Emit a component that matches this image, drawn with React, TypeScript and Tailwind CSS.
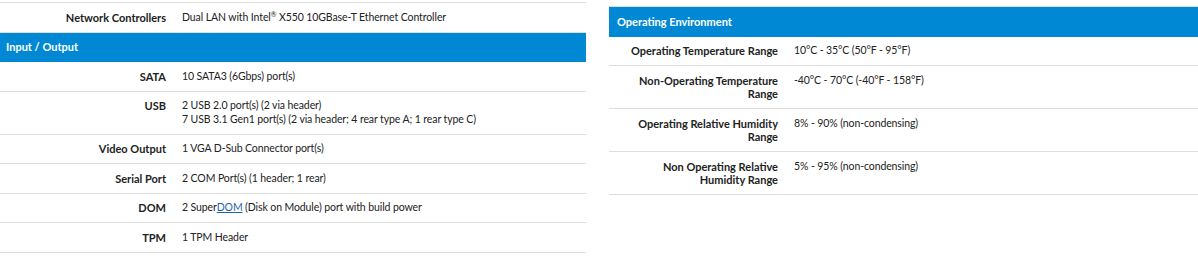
type Row = { label: React.ReactNode; value: React.ReactNode };

const FONT = "font-['Lato','Open_Sans',sans-serif]";

const ioRows: Row[] = [
  { label: "SATA", value: "10 SATA3 (6Gbps) port(s)" },
  {
    label: "USB",
    value: (
      <>
        2 USB 2.0 port(s) (2 via header)
        <br />7 USB 3.1 Gen1 port(s) (2 via header; 4 rear type A; 1 rear type C)
      </>
    ),
  },
  { label: "Video Output", value: "1 VGA D-Sub Connector port(s)" },
  { label: "Serial Port", value: "2 COM Port(s) (1 header; 1 rear)" },
  {
    label: "DOM",
    value: (
      <>
        2 Super
        <span className="text-[#1f64ad] underline">DOM</span> (Disk on Module)
        port with build power
      </>
    ),
  },
  { label: "TPM", value: "1 TPM Header" },
];

const envRows: Row[] = [
  {
    label: "Operating Temperature Range",
    value: "10°C - 35°C (50°F - 95°F)",
  },
  {
    label: (
      <>
        Non-Operating Temperature
        <br />
        Range
      </>
    ),
    value: "-40°C - 70°C (-40°F - 158°F)",
  },
  {
    label: (
      <>
        Operating Relative Humidity
        <br />
        Range
      </>
    ),
    value: "8% - 90% (non-condensing)",
  },
  {
    label: (
      <>
        Non Operating Relative
        <br />
        Humidity Range
      </>
    ),
    value: "5% - 95% (non-condensing)",
  },
];

function SpecRow({ row, labelW }: { row: Row; labelW: string }) {
  return (
    <div className="flex border-b border-[#dedede] leading-[13.5px]">
      <div
        className={`${labelW} shrink-0 py-[7.5px] pr-2 text-right text-[11px] font-bold text-[#222]`}
      >
        {row.label}
      </div>
      <div className="py-[7.5px] pl-2 text-[10.5px] tracking-[-0.1px] text-[#222]">
        {row.value}
      </div>
    </div>
  );
}

function Header({ title, pad }: { title: string; pad: string }) {
  return (
    <div
      className={`border-b border-[#0088d4] bg-[#0088d4] py-[7.5px] ${pad} text-[11px] font-bold leading-[13.5px] text-white`}
    >
      {title}
    </div>
  );
}

export default function App() {
  return (
    <div className={`flex h-[258px] w-[1198px] gap-[23px] bg-white ${FONT}`}>
      <div className="w-[586px] shrink-0 pt-[2px]">
        <div className="border-t border-[#dedede]" />
        <SpecRow
          labelW="w-[174px]"
          row={{
            label: "Network Controllers",
            value: (
              <>
                Dual LAN with Intel<sup className="text-[7px]">®</sup> X550
                10GBase-T Ethernet Controller
              </>
            ),
          }}
        />
        <Header title="Input / Output" pad="pl-[6px]" />
        {ioRows.map((r, i) => (
          <SpecRow key={i} row={r} labelW="w-[174px]" />
        ))}
      </div>

      <div className="flex-1 pt-[6px]">
        <div className="border-t border-[#dedede]" />
        <Header title="Operating Environment" pad="pl-2" />
        {envRows.map((r, i) => (
          <SpecRow key={i} row={r} labelW="w-[177px]" />
        ))}
      </div>
    </div>
  );
}
